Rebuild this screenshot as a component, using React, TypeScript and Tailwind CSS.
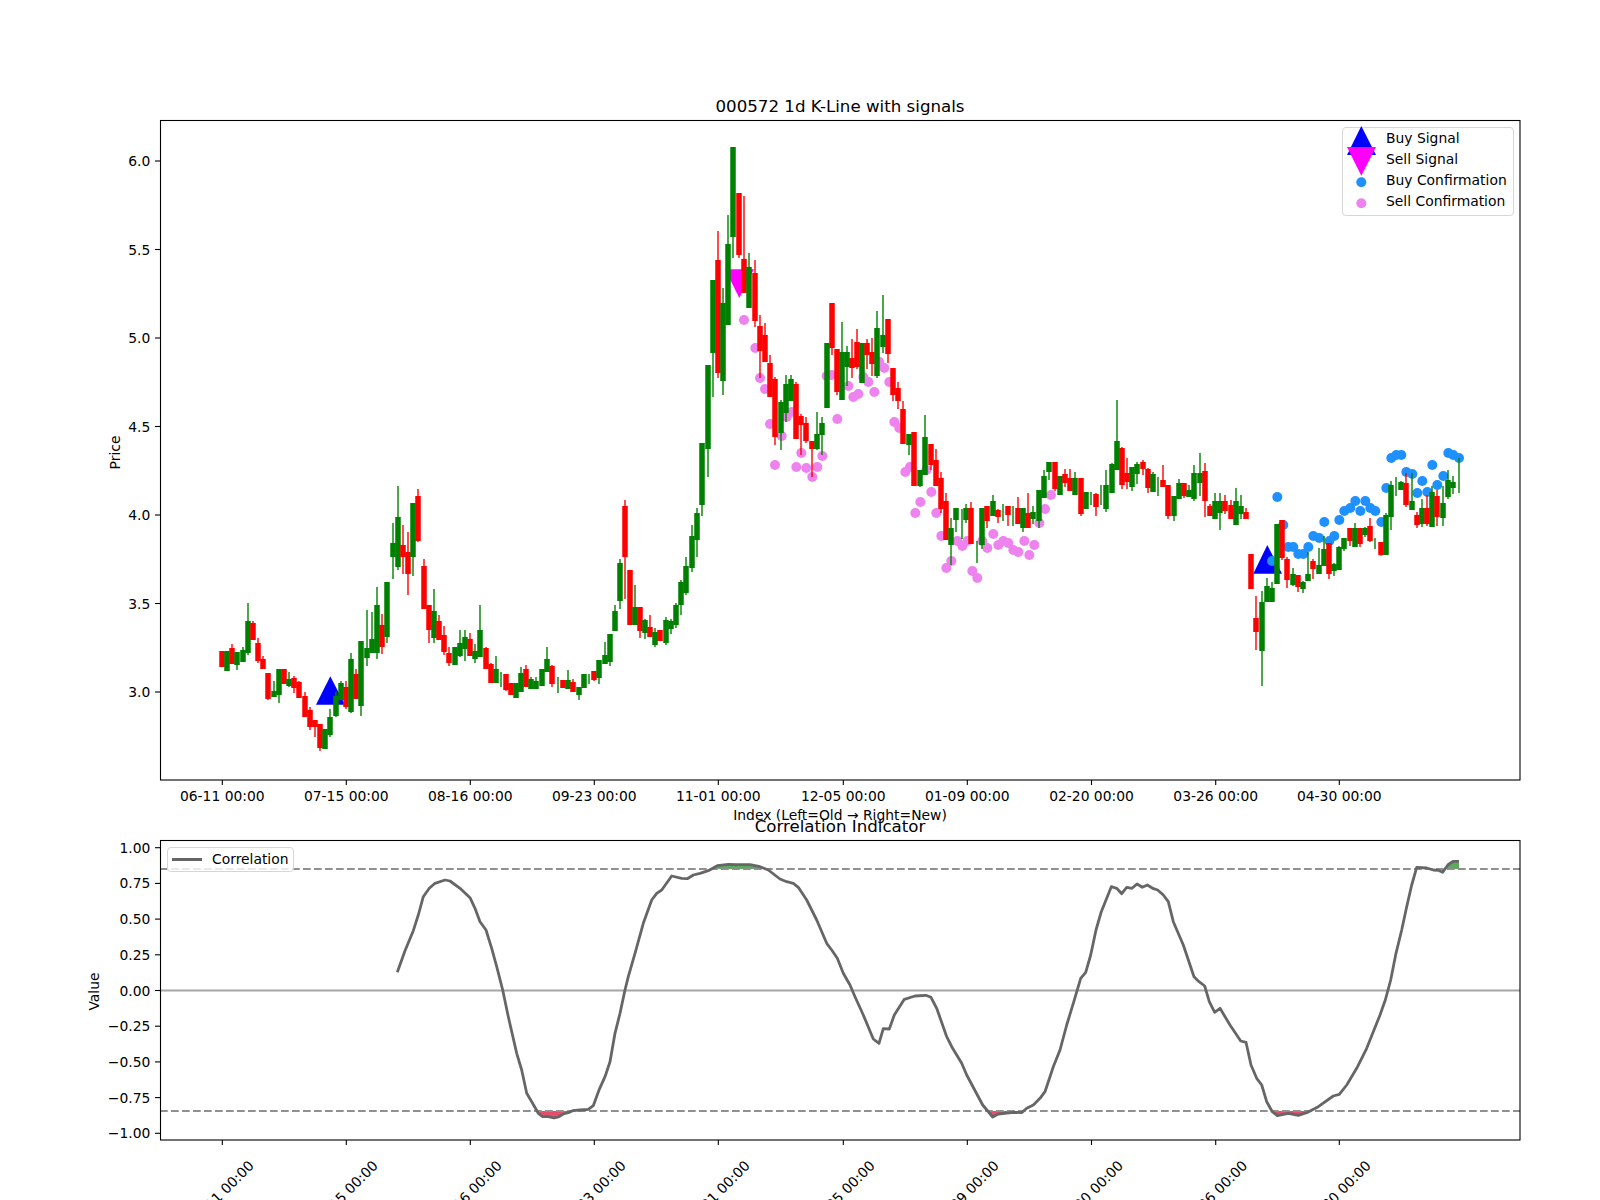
type Candle = [number, 'r' | 'g', number, number, number, number]

// [x, colour, wick top, body top, body bottom, wick bottom] in figure pixels
const candles: Candle[] = [
  [221.5,'r',651,651,667,667],[226.7,'g',651,651,671,671],[231.7,'r',644,648,664,664],[236.7,'g',652,652,665,670],
  [242.7,'g',647,650,662,662],[247.7,'g',603,621,653,655],[252.7,'r',621,623,640,640],[257.7,'r',638,643,661,663],
  [263,'r',656,659,669,669],[268,'r',673,673,699,700],[274,'g',681,691,697,697],[279,'g',669,669,695,703],
  [284,'r',669,669,684,684],[288.7,'g',672,679,686,687],[294,'r',676,678,688,693],[299,'r',681,682,698,698],
  [304.7,'r',692,696,717,717],[310,'r',707,710,727,730],[315,'r',720,720,727,737],[320,'r',724,724,748,751],
  [325,'g',729,729,749,749],[330,'g',709,717,735,737],[335.7,'g',692,696,716,717],[340.7,'g',681,683,700,700],
  [345.7,'r',681,687,707,709],[350.7,'g',653,659,712,713],[355.7,'r',669,674,699,699],[360.7,'g',641,641,706,716],
  [366.7,'g',610,648,658,666],[371.7,'g',612,639,653,653],[376.7,'g',587,605,653,659],[381.7,'r',614,625,647,654],
  [386.7,'g',582,582,637,643],[393,'g',523,543,557,579],[398,'g',486,517,567,570],[403,'r',525,545,557,574],
  [408,'r',532,552,574,595],[413,'g',503,503,557,576],[418,'r',489,496,541,542],[424,'r',559,566,609,609],
  [429.3,'r',605,605,630,643],[434,'g',589,611,638,643],[439.3,'r',615,621,640,640],[444,'r',626,635,652,655],
  [449,'r',647,653,663,666],[455,'g',647,647,665,665],[460,'g',630,643,656,657],[465,'g',630,637,649,661],
  [470,'r',633,639,656,656],[475,'g',644,651,659,663],[480,'g',605,630,657,657],[486,'r',647,648,669,669],
  [491,'r',663,664,683,683],[496,'g',656,669,683,683],[501,'g',672,680,680,687],[506,'r',674,674,690,691],
  [511,'r',683,683,695,695],[516,'g',683,683,698,698],[521,'g',667,673,692,692],[526,'r',665,669,687,687],
  [531,'g',677,679,689,689],[536,'g',677,681,689,689],[542,'g',669,669,686,686],[547,'g',647,659,672,672],
  [552,'r',665,666,684,687],[558,'g',677,685,685,693],[563,'r',680,680,688,688],[568,'g',670,680,689,689],
  [573,'r',679,682,692,692],[579,'g',687,687,695,700],[584,'g',674,674,688,688],[589,'g',674,680,680,684],
  [594,'r',671,671,680,681],[599,'g',660,660,678,684],[605,'g',642,655,664,664],[610,'g',634,634,662,666],
  [615,'g',605,611,631,631],[620,'g',559,563,601,609],[625,'r',500,506,557,599],[630,'r',570,570,625,625],
  [635,'g',585,607,625,625],[640,'r',607,607,631,638],[645,'g',619,620,633,639],[650,'r',615,627,637,637],
  [655,'g',628,632,645,647],[660,'r',630,630,641,641],[666,'g',617,620,643,645],[671,'g',619,621,629,634],
  [676,'g',603,605,625,628],[681,'g',580,582,605,615],[686,'g',557,566,593,595],[692,'g',525,536,568,572],
  [697,'g',508,513,540,557],[702,'g',443,443,505,516],[708,'g',365,365,449,477],[713,'g',280,280,353,397],
  [718,'r',231,260,373,378],[723,'g',288,303,381,395],[728,'g',215,244,325,325],[733,'g',147,147,237,258],
  [739,'r',193,193,255,258],[744,'r',196,259,293,293],[749,'g',253,267,308,308],[755,'r',260,273,321,327],
  [760,'r',315,326,351,378],[765,'r',323,335,362,362],[770,'r',355,363,397,397],[775,'r',377,379,437,445],
  [781,'g',400,402,433,450],[786,'g',375,384,413,422],[791,'g',375,379,401,401],[796,'r',382,384,439,439],
  [801,'r',414,416,425,455],[806,'r',417,423,441,443],[812,'r',441,441,449,477],[817,'g',412,434,449,450],
  [822,'g',417,423,435,455],[827,'g',343,343,408,408],[832,'r',303,303,348,355],[837,'r',349,349,392,395],
  [842,'g',322,352,400,400],[847,'g',346,352,367,386],[852,'r',339,358,368,378],[857,'r',329,342,367,369],
  [862,'g',343,343,383,383],[867,'r',339,343,355,369],[872,'r',338,352,364,376],[877,'g',311,328,376,378],
  [883,'g',295,335,347,353],[888,'r',319,319,354,363],[893,'r',368,368,395,401],[898,'r',382,388,401,409],
  [903,'r',401,409,444,444],[909,'g',434,434,445,455],[914,'r',432,432,486,486],[920,'g',470,470,486,487],
  [925,'g',415,437,475,475],[931,'r',444,444,465,470],[936,'r',449,460,486,486],[941,'r',472,478,509,513],
  [946,'r',493,501,540,540],[951,'g',518,528,545,565],[956,'g',508,508,520,532],[962,'g',509,525,525,539],
  [966,'g',504,508,520,523],[971,'r',502,508,544,544],[977,'g',541,552,552,563],[982,'g',508,508,545,549],
  [987,'r',506,506,521,528],[993,'g',495,501,516,516],[998,'r',509,510,517,523],[1003,'g',504,513,513,521],
  [1008,'r',506,506,515,526],[1013,'g',506,516,516,526],[1018,'r',497,508,524,524],[1023,'g',508,508,528,532],
  [1028,'r',493,513,528,528],[1033,'g',506,512,519,524],[1039,'g',490,490,521,528],[1044,'g',470,476,498,498],
  [1049,'g',462,462,472,480],[1054.7,'r',462,462,489,491],[1059.7,'g',476,476,495,495],[1065,'r',469,474,483,487],
  [1070,'r',469,478,491,491],[1075,'g',472,478,495,495],[1080.7,'r',478,478,514,516],[1086,'g',492,492,509,509],
  [1091,'g',492,498,498,505],[1096,'r',493,494,507,516],[1101,'g',485,495,495,505],[1106,'g',470,485,509,512],
  [1111.7,'g',463,464,493,493],[1117,'g',400,441,470,470],[1122,'r',447,448,485,489],[1127,'r',458,473,482,489],
  [1132,'g',467,467,487,491],[1137,'g',462,464,474,484],[1143,'r',460,462,469,475],[1148,'r',468,469,488,493],
  [1153,'g',472,474,492,492],[1158,'g',477,486,486,496],[1163,'r',465,480,487,487],[1168,'r',485,485,516,519],
  [1173.7,'g',496,496,516,521],[1179,'g',479,483,499,499],[1184,'r',483,483,496,498],[1189,'g',485,490,497,497],
  [1194,'g',465,473,499,501],[1200,'g',453,473,483,496],[1205,'r',463,471,501,517],[1209.7,'r',504,506,516,516],
  [1215,'g',493,501,519,519],[1220,'g',493,501,513,530],[1225,'r',495,501,511,514],[1230.7,'r',500,505,519,519],
  [1236,'g',488,501,525,525],[1241,'g',495,506,514,519],[1246,'r',508,512,519,519],[1251,'r',554,554,589,589],
  [1256,'r',596,618,632,650],[1262,'g',591,602,651,686],[1267,'g',578,586,602,602],[1272,'g',582,588,602,602],
  [1277,'g',524,524,584,584],[1282,'r',520,520,558,560],[1287,'r',557,559,580,588],[1292.7,'g',568,574,585,586],
  [1298,'r',575,575,587,592],[1303,'g',581,582,589,593],[1308,'g',552,574,581,581],[1313,'r',559,561,569,579],
  [1319,'g',548,565,574,574],[1324,'g',536,549,566,566],[1329,'r',543,543,574,579],[1334,'g',563,564,571,576],
  [1339,'g',546,547,570,570],[1344,'g',538,538,549,551],[1349.7,'r',528,528,541,546],[1355,'g',523,528,547,547],
  [1360,'r',528,528,544,547],[1365,'g',527,528,535,537],[1370,'r',518,526,541,542],[1375,'g',538,543,543,549],
  [1380.7,'r',542,542,555,556],[1385.7,'g',513,515,555,555],[1391,'g',481,485,517,530],[1396,'g',477,486,486,496],
  [1401,'g',481,482,490,490],[1406,'r',473,483,505,507],[1412,'g',473,501,510,510],[1417,'r',512,515,525,528],
  [1422,'g',499,508,524,527],[1427,'r',495,508,524,526],[1432,'g',486,492,527,527],[1437,'r',490,496,517,526],
  [1443,'g',486,503,518,526],[1448,'g',470,480,497,499],[1453,'g',476,482,488,494],[1458.7,'g',458,475,475,493],
]

const sellDots = [
  [744,320],[755.3,348],[760,378],[765,389],[770,424],[775,465],[781.7,436],[786.7,417],[791.7,412],[796.3,467],
  [801.3,453],[806.3,468],[812.3,477],[817.3,467],[822.3,456],[826.7,376],[831.7,375],[837.3,419],[848.3,386],
  [853.3,397],[858.3,394],[863.3,377],[868.3,382],[874.3,392],[879.3,362],[884.3,368],[889.3,382],[894.3,422],
  [899.3,428],[905.3,472],[910,467],[915.3,513],[920.3,502],[926.3,470],[931.3,492],[936.3,513],[941.3,536],
  [946.3,568],[951.3,561],[957.3,541],[962.3,546],[967.3,541],[972.3,571],[977.3,578],[982.3,541],[987.3,548],
  [993.3,534],[998.3,545],[1003.3,541],[1008.3,543],[1013.3,550],[1018.3,552],[1024.3,541],[1029.3,555],
  [1034.3,545],[1039.3,523],[1045,509],[1051,495],
]

const buyDots = [
  [1272,561],[1277.3,497],[1283.3,525],[1288.3,547],[1293.3,547],[1298.3,554],[1303.3,554],[1308.3,547],[1313.3,536],
  [1319.3,538],[1324.3,522],[1329.3,541],[1334.3,536],[1339.3,520],[1344.3,511],[1350.3,508],[1355.3,501],
  [1360.3,511],[1365.3,501],[1370.3,508],[1375.3,511],[1381.3,522],[1386.3,488],[1391.3,458],[1396.3,455],
  [1401.3,455],[1406.3,472],[1412.3,474],[1417.3,493],[1422.3,481],[1427.3,492],[1432.3,465],[1437.3,485],
  [1443.3,476],[1448.3,453],[1453.3,455],[1459,458],
]

// correlation curve, figure pixels
const corrPoints = [
  [397.3,972.3],[405,950.7],[413.3,930.7],[418.3,915],[423.3,896.7],[429.3,888.3],[435,883.3],[445,880],[450,881],
  [460,888.3],[470,897.7],[475,908.3],[480,921.7],[486,930],[491.7,948.3],[496.7,966.7],[502.7,990],[508.3,1016.7],
  [516.7,1053.3],[521.7,1070],[526.7,1093.3],[532.3,1102.7],[538.3,1113.3],[542.7,1116.7],[548.3,1116.7],[554,1118],
  [558.3,1117],[563.3,1114],[568.3,1112.7],[572.7,1110.7],[580,1110],[588.3,1109.3],[593.3,1105.7],[599.3,1089.3],
  [605,1076.7],[610,1061.7],[615,1033.3],[620,1013.3],[625,990],[628.3,976.7],[635,953.3],[643.3,923.3],[651.7,900],
  [656.7,893.3],[661.7,890],[671.7,876],[681.7,878.3],[687.3,878.7],[693.3,875],[700,873.3],[708.3,870.7],[717.3,865.7],
  [728.3,864.3],[736.7,864.7],[750,864.7],[760,866.7],[768.3,870],[780,879],[786.7,881.7],[793.3,883.3],[798.3,887.3],
  [806.7,900],[816.7,920],[826.7,943.3],[831.7,950],[837.3,958.3],[843.3,973.3],[850,985],[855,996.7],[863.3,1015],
  [873.3,1039],[879,1043.3],[883.3,1028.7],[889.3,1029],[894.3,1015],[904.3,999.3],[915,996],[925.7,995.3],[931,997.3],
  [936.7,1008.3],[946.7,1036.7],[951.7,1046.7],[961.7,1063.3],[966.7,1075],[982.7,1105],[992.7,1117],[998.3,1114],
  [1013.3,1112.3],[1021.7,1112.7],[1026.7,1108.3],[1033.3,1105],[1040,1098.3],[1045,1091.7],[1053.3,1066.7],
  [1060,1050],[1066.7,1025],[1073.3,1003.3],[1080.7,978.3],[1085.7,972.3],[1090.7,955],[1096,930],[1101.3,911.7],
  [1111.3,886.7],[1116.7,888.3],[1121.7,893.7],[1126.7,887.3],[1132,888.3],[1137,884],[1142.3,887.3],[1147.3,885],
  [1152.7,888.3],[1157.7,890],[1163.3,895],[1168.3,901.7],[1173.3,921.7],[1183.3,945],[1194,976.7],[1199,981.7],
  [1204.7,986],[1209.3,1001.7],[1214.7,1012.3],[1220,1008.3],[1230,1025],[1240.7,1041],[1246,1042.3],[1251,1065],
  [1256.7,1078.3],[1261.7,1085],[1266.7,1101.7],[1272.3,1111.7],[1277.3,1115.7],[1288.3,1113.3],[1298.3,1115.3],
  [1306.7,1112.7],[1318.3,1106.7],[1333.3,1096],[1339.3,1094.3],[1346.7,1085],[1356.7,1068.3],[1366.7,1048.3],
  [1380,1015],[1385.3,1000],[1390.7,980],[1396,953.3],[1401.7,930],[1406.7,906.7],[1411.7,885],[1416.7,867.3],
  [1426.7,868],[1433.3,870],[1438.3,870.3],[1442.7,872.3],[1448,864.7],[1453.3,861.3],[1459,861.3],
]

const corrLine = corrPoints.map((p) => p.join(',')).join(' ')
const first = corrPoints[0]
const last = corrPoints[corrPoints.length - 1]
const lowFill = `M${corrLine} L${last[0]},1111 L${first[0]},1111 Z`
const highFill = `M${corrLine} L${last[0]},869 L${first[0]},869 Z`

const dateTicks = [
  [222.3, '06-11 00:00'], [346.3, '07-15 00:00'], [470.3, '08-16 00:00'], [594.3, '09-23 00:00'], [718.3, '11-01 00:00'],
  [843.3, '12-05 00:00'], [967.3, '01-09 00:00'], [1091.5, '02-20 00:00'], [1215.7, '03-26 00:00'], [1339.3, '04-30 00:00'],
] as const

const priceTicks = [
  ['3.0', 692], ['3.5', 603.5], ['4.0', 515], ['4.5', 426.5], ['5.0', 338], ['5.5', 249.5], ['6.0', 161],
] as const

const corrTicks = [
  ['1.00', 847.7], ['0.75', 883.4], ['0.50', 919.1], ['0.25', 954.8], ['0.00', 990.5],
  ['\u22120.25', 1026.2], ['\u22120.50', 1061.9], ['\u22120.75', 1097.6], ['\u22121.00', 1133.3],
] as const

function PriceChart() {
  return (
    <svg viewBox="0 0 1600 825" className="w-[1600px] h-[825px] overflow-visible text-[13.89px]">
      <polygon points="330.3,676.3 316,704.7 345,704.7" fill="#0000ff" />
      <polygon points="1267.3,545 1253.3,573.7 1282,573.7" fill="#0000ff" />
      <polygon points="725,269.3 754,269.3 739.3,298" fill="#ff00ff" />
      {sellDots.map(([x, y]) => (
        <circle key={x} cx={x} cy={y} r={5} fill="#ee82ee" />
      ))}
      {buyDots.map(([x, y]) => (
        <circle key={x} cx={x} cy={y} r={5} fill="#1e90ff" />
      ))}
      {candles.map(([x, c, wickTop, top, bottom, wickBottom]) => {
        const colour = c === 'r' ? '#ff0000' : '#008000'
        return (
          <g key={x}>
            <rect x={Math.round(x) - 0.7} y={wickTop} width={1.4} height={wickBottom - wickTop} fill={colour} />
            {bottom > top && <rect x={Math.round(x) - 2.75} y={top} width={5.5} height={bottom - top} fill={colour} />}
          </g>
        )
      })}
      <rect x={160.5} y={120.5} width={1359.5} height={659.5} fill="none" stroke="#000" strokeWidth={1.1} />
      {dateTicks.map(([x, label]) => (
        <g key={label}>
          <line x1={x} x2={x} y1={780} y2={785} stroke="#000" strokeWidth={1.1} />
          <text x={x} y={800.5} textAnchor="middle">{label}</text>
        </g>
      ))}
      {priceTicks.map(([label, y]) => (
        <g key={label}>
          <line x1={155} x2={160} y1={y} y2={y} stroke="#000" strokeWidth={1.1} />
          <text x={150.3} y={y + 5} textAnchor="end">{label}</text>
        </g>
      ))}
      <text x={840} y={112} textAnchor="middle" className="text-[16.67px]">000572 1d K-Line with signals</text>
      <text x={840} y={820} textAnchor="middle">Index (Left=Old → Right=New)</text>
      <text transform="translate(120 452.5) rotate(-90)" textAnchor="middle">Price</text>
    </svg>
  )
}

function CorrelationChart() {
  return (
    <svg viewBox="0 825 1600 375" className="w-[1600px] h-[375px] overflow-visible text-[13.89px]">
      <defs>
        <clipPath id="below"><rect x={160} y={1111} width={1360} height={29} /></clipPath>
        <clipPath id="above"><rect x={160} y={840} width={1360} height={29} /></clipPath>
      </defs>
      <path d={lowFill} fill="#dc143c" fillOpacity={0.75} clipPath="url(#below)" />
      <path d={highFill} fill="#008000" fillOpacity={0.65} clipPath="url(#above)" />
      <line x1={160} x2={1520} y1={990.5} y2={990.5} stroke="#a6a6a6" strokeWidth={2} />
      <line x1={160} x2={1520} y1={869} y2={869} stroke="#909090" strokeWidth={2} strokeDasharray="7.7 3.3" />
      <line x1={160} x2={1520} y1={1111} y2={1111} stroke="#909090" strokeWidth={2} strokeDasharray="7.7 3.3" />
      <polyline points={corrLine} fill="none" stroke="#666666" strokeWidth={2.8} strokeLinejoin="round" />
      <rect x={160.5} y={840.5} width={1359.5} height={299.5} fill="none" stroke="#000" strokeWidth={1.1} />
      {dateTicks.map(([x, label]) => (
        <g key={label}>
          <line x1={x} x2={x} y1={1140} y2={1145} stroke="#000" strokeWidth={1.1} />
          <text transform={`translate(${x - 1} 1193) rotate(-45)`} textAnchor="middle" dominantBaseline="central">{label}</text>
        </g>
      ))}
      {corrTicks.map(([label, y]) => (
        <g key={label}>
          <line x1={155} x2={160} y1={y} y2={y} stroke="#000" strokeWidth={1.1} />
          <text x={150.3} y={y + 5} textAnchor="end">{label}</text>
        </g>
      ))}
      <text x={840} y={831.5} textAnchor="middle" className="text-[16.67px]">Correlation Indicator</text>
      <text transform="translate(99 991.5) rotate(-90)" textAnchor="middle">Value</text>
    </svg>
  )
}

function SignalLegend() {
  const rows = ['Buy Signal', 'Sell Signal', 'Buy Confirmation', 'Sell Confirmation']
  return (
    <div className="absolute left-[1342px] top-[127px] w-[172px] h-[89px] rounded-[4px] border border-[#d6d6d6] bg-white/80 pl-[43px]">
      <svg viewBox="1342 127 172 89" className="absolute left-[-1px] top-[-1px] w-[172px] h-[89px] overflow-visible">
        <polygon points="1361.3,126 1347,155 1376,155" fill="#0000ff" />
        <polygon points="1347,147 1376,147 1361.3,175.7" fill="#ff00ff" />
        <circle cx={1361.3} cy={182.3} r={5} fill="#1e90ff" />
        <circle cx={1361.3} cy={203.3} r={5} fill="#ee82ee" />
      </svg>
      <div className="flex flex-col">
        {rows.map((row) => (
          <div key={row} className="h-[21px] leading-[20.5px] whitespace-nowrap">{row}</div>
        ))}
      </div>
    </div>
  )
}

function CorrelationLegend() {
  return (
    <div className="absolute left-[167px] top-[22px] flex items-center w-[127px] h-[25px] rounded-[4px] border border-[#d6d6d6] bg-white/80 pl-[4px] gap-[10px]">
      <div className="w-[30px] h-[3px] bg-[#666666]" />
      <span className="whitespace-nowrap">Correlation</span>
    </div>
  )
}

export default function App() {
  return (
    <div className="flex flex-col w-[1600px] h-[1200px] overflow-hidden bg-white text-black text-[13.89px] font-['DejaVu_Sans',sans-serif]">
      <section className="relative h-[825px]">
        <PriceChart />
        <SignalLegend />
      </section>
      <section className="relative h-[375px]">
        <CorrelationChart />
        <CorrelationLegend />
      </section>
    </div>
  )
}
